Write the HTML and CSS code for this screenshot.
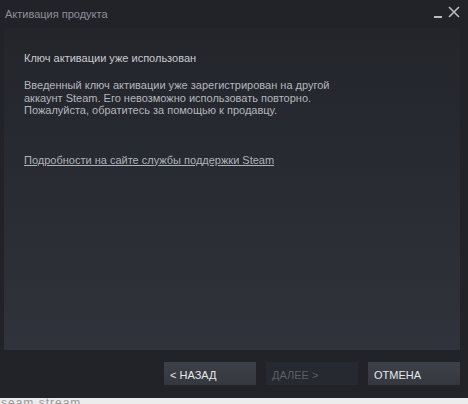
FILE: index.html
```html
<!DOCTYPE html>
<html lang="ru">
<head>
<meta charset="utf-8">
<link rel="stylesheet" href="styles.css">
</head>
<body>
<div class="window">
  <div class="titlebar">
    <span class="title">Активация продукта</span>
    <div class="controls">
      <span class="min"></span>
      <svg class="close" width="12" height="12" viewBox="0 0 12 12"><path d="M1 1L11 11M11 1L1 11" stroke="#b9bcc2" stroke-width="1.6"/></svg>
    </div>
  </div>
  <div class="panel">
    <p class="heading">Ключ активации уже использован</p>
    <p class="body">Введенный ключ активации уже зарегистрирован на другой<br>аккаунт Steam. Его невозможно использовать повторно.<br>Пожалуйста, обратитесь за помощью к продавцу.</p>
    <a class="link" href="#">Подробности на сайте службы поддержки Steam</a>
  </div>
  <div class="footer">
    <button class="btn">&lt; НАЗАД</button>
    <button class="btn disabled">ДАЛЕЕ &gt;</button>
    <button class="btn">ОТМЕНА</button>
  </div>
</div>
<div class="under"><span>seam stream</span></div>
</body>
</html>
```
FILE: styles.css
```css
html, body {
  margin: 0;
  padding: 0;
  background: #ececec;
  width: 468px;
  height: 404px;
  overflow: hidden;
  font-family: "Liberation Sans", Arial, sans-serif;
}
.window {
  width: 468px;
  height: 398px;
  background: #212328;
  display: flex;
  flex-direction: column;
  box-sizing: border-box;
}
.titlebar {
  height: 28px;
  display: flex;
  align-items: center;
  justify-content: space-between;
  padding: 0 8px 0 5px;
  box-sizing: border-box;
}
.title {
  font-size: 11px;
  color: #8d9099;
  margin-top: -1px;
}
.controls {
  display: flex;
  align-items: flex-end;
  gap: 6px;
  margin-top: -4px;
}
.min {
  width: 8px;
  height: 2px;
  background: #b9bcc2;
}
.panel {
  margin: 0 8px 0 4px;
  height: 322px;
  box-sizing: border-box;
  background: linear-gradient(to bottom, #23252b 0%, #2a2d34 60%, #30333b 100%);
  padding: 24px 20px 0 20px;
}
.heading {
  margin: 0;
  font-size: 11px;
  color: #c8cbd0;
  line-height: 13px;
}
.body {
  margin: 14px 0 0 0;
  font-size: 11px;
  color: #b4b7bd;
  line-height: 12.5px;
}
.link {
  display: inline-block;
  margin-top: 37px;
  font-size: 11px;
  color: #b0b3b9;
  line-height: 13px;
  text-decoration: underline;
}
.footer {
  display: flex;
  justify-content: flex-end;
  gap: 10px;
  padding: 12px 8px 0 0;
}
.btn {
  width: 92px;
  height: 23px;
  border: none;
  background: linear-gradient(to bottom, #3d4047, #35383f);
  color: #e6e8eb;
  font-family: "Liberation Sans", Arial, sans-serif;
  font-size: 11px;
  text-align: left;
  padding: 2px 0 0 6px;
  box-sizing: border-box;
}
.btn.disabled {
  background: #262930;
  color: #5c5f66;
}
.under {
  height: 6px;
  overflow: hidden;
  padding-left: 1px;
}
.under span {
  display: block;
  font-size: 12px;
  line-height: 14px;
  color: #9a9a9a;
  margin-top: -2px;
  letter-spacing: 1px;
}
```
